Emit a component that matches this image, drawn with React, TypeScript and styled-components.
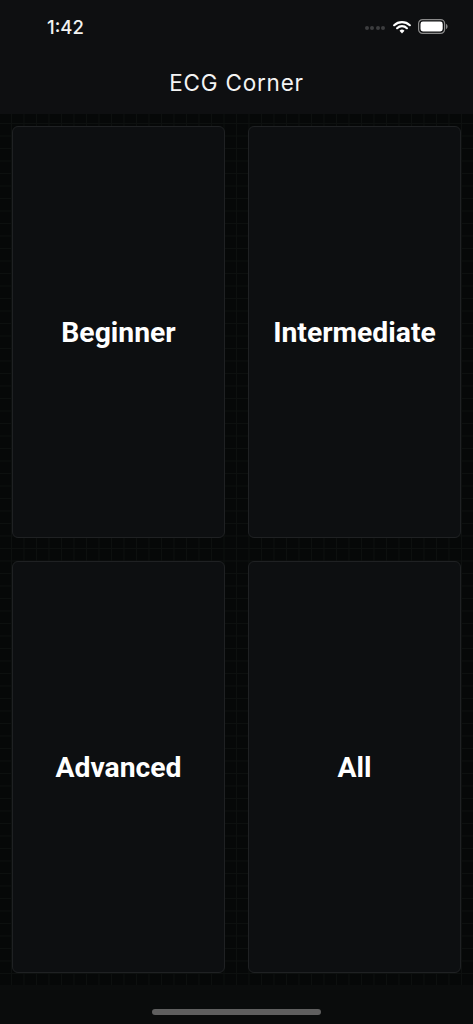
import styled, { createGlobalStyle } from "styled-components";

const GlobalStyle = createGlobalStyle`
  html, body {
    margin: 0;
    padding: 0;
    background: #0a0c0c;
  }
`;

const Screen = styled.div`
  width: 473px;
  height: 1024px;
  display: flex;
  flex-direction: column;
  overflow: hidden;
  color: #fff;
`;

const Header = styled.header`
  height: 114px;
  flex-shrink: 0;
  background: #0e0f11;
  display: flex;
  flex-direction: column;
`;

const StatusBar = styled.div`
  height: 53px;
  display: flex;
  align-items: center;
  justify-content: space-between;
  padding: 0 25px 0 47px;
`;

const Time = styled.span`
  font-family: "Inter", sans-serif;
  font-size: 18.5px;
  font-weight: 500;
  color: #f2f2f2;
`;

const StatusIcons = styled.div`
  display: flex;
  align-items: center;
  gap: 7px;
`;

const Dots = styled.div`
  display: flex;
  gap: 1.5px;
  margin-right: 1px;
  margin-top: 2px;
`;

const Dot = styled.span`
  width: 4px;
  height: 4px;
  border-radius: 50%;
  background: #3c3d3f;
`;

const Title = styled.h1`
  margin: 0;
  text-align: center;
  font-family: "Inter", sans-serif;
  font-size: 22.5px;
  font-weight: 400;
  line-height: 60px;
  letter-spacing: 0.8px;
  color: #f4f4f4;
`;

const GridArea = styled.main`
  flex: 0 0 871px;
  box-sizing: border-box;
  padding: 12px;
  display: grid;
  grid-template-columns: 213px 213px;
  grid-template-rows: 412px 412px;
  column-gap: 23px;
  row-gap: 23px;
  background-color: #060808;
  background-image:
    linear-gradient(to right, #0d100f 1px, transparent 1px),
    linear-gradient(to bottom, #0d100f 1px, transparent 1px);
  background-size: 12.5px 12.5px;
  background-position: 236px 434px;
`;

const Card = styled.button`
  border: 1px solid #1f2123;
  border-radius: 6px;
  background: #0d0f11;
  color: #fff;
  font-family: "Roboto", sans-serif;
  font-size: 28.3px;
  font-weight: 700;
  padding: 0;
`;

const HomeArea = styled.div`
  flex: 1;
  background: #0a0c0c;
  display: flex;
  justify-content: center;
  padding-top: 24px;
`;

const HomeBar = styled.div`
  width: 169px;
  height: 6px;
  border-radius: 3px;
  background: #5f5f5f;
`;

const levels = ["Beginner", "Intermediate", "Advanced", "All"];

export default function App() {
  return (
    <Screen>
      <GlobalStyle />
      <Header>
        <StatusBar>
          <Time>1:42</Time>
          <StatusIcons>
            <Dots>
              <Dot />
              <Dot />
              <Dot />
              <Dot />
            </Dots>
            <svg width="18" height="14" viewBox="0 0 18 14" fill="none">
              <path d="M1.2 5.2a11.2 11.2 0 0 1 15.6 0" stroke="#fff" strokeWidth="2.2" strokeLinecap="round" />
              <path d="M4.1 8.2a7 7 0 0 1 9.8 0" stroke="#fff" strokeWidth="2.2" strokeLinecap="round" />
              <path d="M9 13.4l-2.500-2.700a3.500 3.500 0 0 1 5 0z" fill="#fff" />
            </svg>
            <svg width="30" height="15" viewBox="0 0 30 15" fill="none">
              <rect x="0.6" y="0.6" width="26" height="13.8" rx="4" stroke="#8a8a8a" strokeWidth="1.2" />
              <rect x="2.5" y="2.5" width="22.2" height="10" rx="2.4" fill="#fff" />
              <path d="M28 5v5c1-.3 1.600-1.300 1.600-2.500S29 5.300 28 5z" fill="#8a8a8a" />
            </svg>
          </StatusIcons>
        </StatusBar>
        <Title>ECG Corner</Title>
      </Header>
      <GridArea>
        {levels.map((level) => (
          <Card key={level}>{level}</Card>
        ))}
      </GridArea>
      <HomeArea>
        <HomeBar />
      </HomeArea>
    </Screen>
  );
}
